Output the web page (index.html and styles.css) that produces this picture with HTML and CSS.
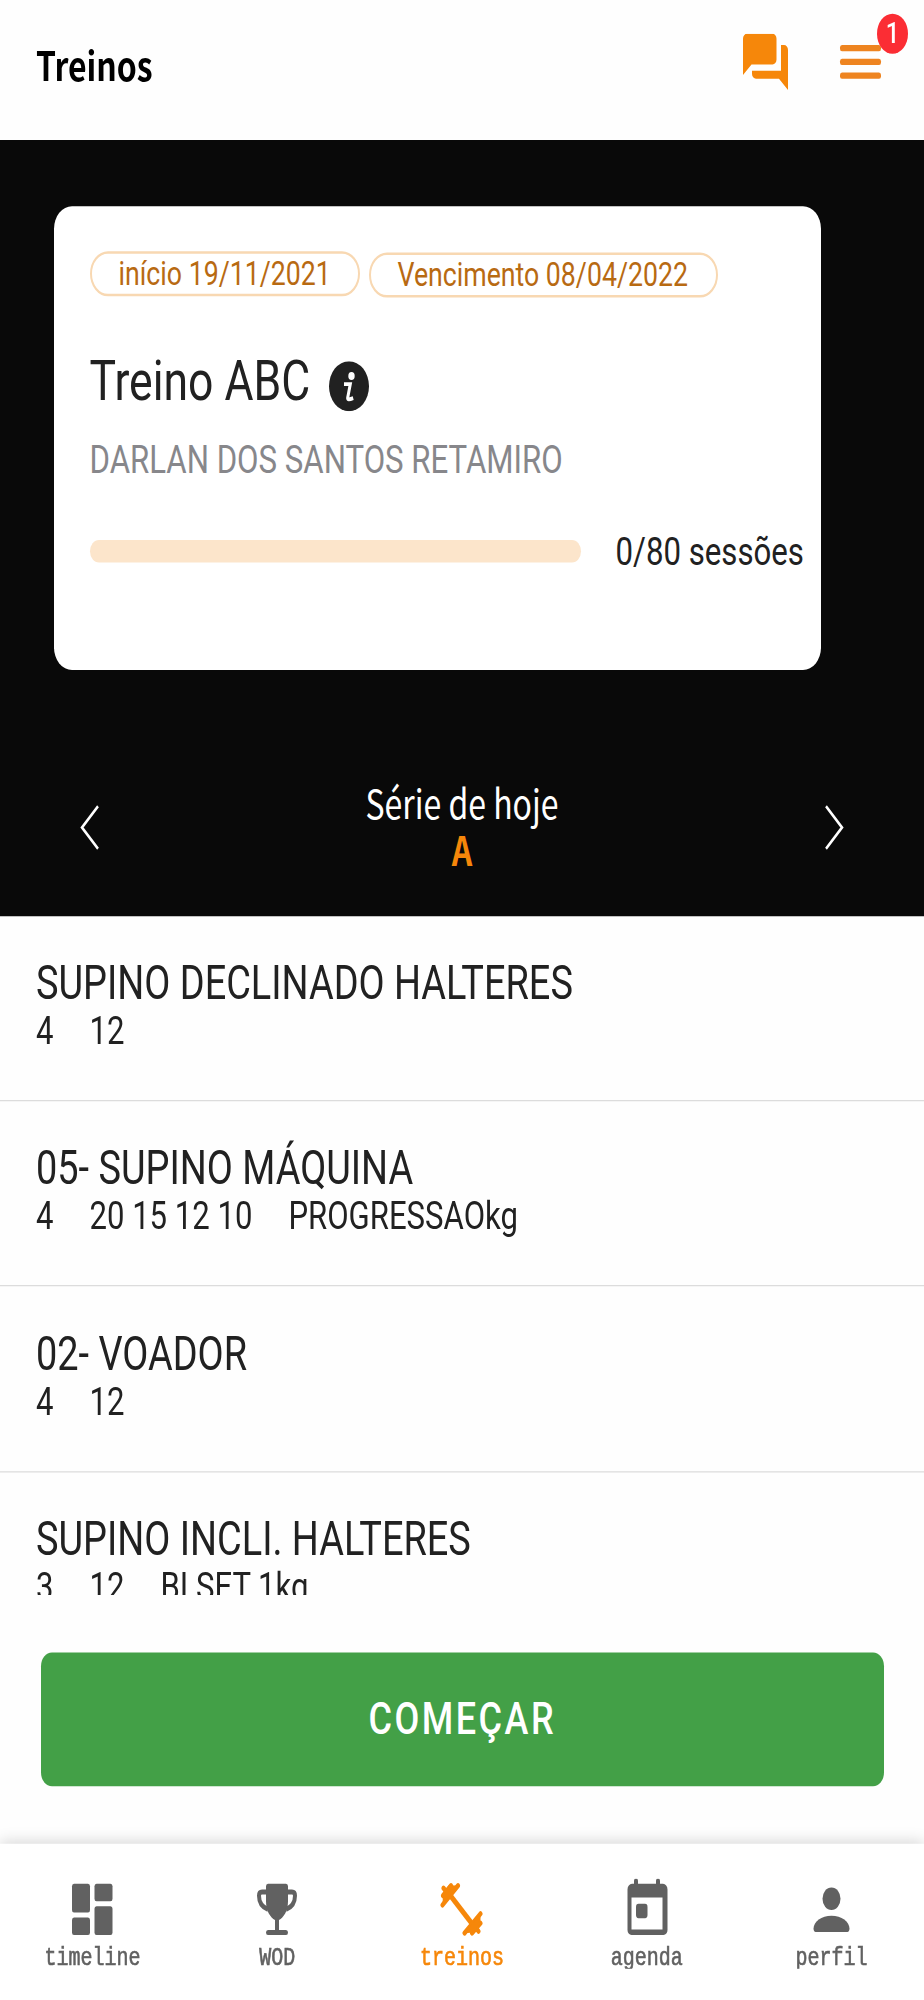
FILE: index.html
```html
<!DOCTYPE html>
<html lang="pt-BR">
<head>
  <meta charset="UTF-8" />
  <meta name="viewport" content="width=device-width, initial-scale=1.0"/>
  <title>Treinos</title>
  <link rel="stylesheet" href="styles.css">
</head>
<body>
  <div class="screen">
    <header class="header">
      <h1>Treinos</h1>
      <div class="header-actions">
        <svg class="chat-icon" viewBox="0 0 45 45">
          <path d="M4 0h25.500a4 4 0 0 1 4 4v16.500a4 4 0 0 1-4 4H8.500L0 33V4a4 4 0 0 1 4-4z"/>
          <path d="M38 9h3a4 4 0 0 1 4 4v32l-9-9H13a4 4 0 0 1-4-4v-2.500h29z"/>
        </svg>
        <div class="menu">
          <span class="menu-line"></span>
          <span class="menu-line"></span>
          <span class="menu-line"></span>
          <span class="badge">1</span>
        </div>
      </div>
    </header>

    <section class="hero">
      <div class="card">
        <div class="chips">
          <span class="chip chip-start">início 19/11/2021</span>
          <span class="chip chip-end">Vencimento 08/04/2022</span>
        </div>
        <div class="card-title">
          <h2>Treino ABC</h2>
          <svg class="info-icon" viewBox="0 0 40 40">
            <circle cx="20" cy="20" r="20"/>
            <circle class="info-mark" cx="22.500" cy="11.800" r="3.200"/>
            <path class="info-stroke" d="M15 18.200h6.300l-2.600 11c-.3 1.600 1.500 1.600 5.500.3"/>
          </svg>
        </div>
        <p class="teacher">DARLAN DOS SANTOS RETAMIRO</p>
        <div class="progress">
          <div class="progress-bar"></div>
          <span class="progress-text">0/80 sessões</span>
        </div>
      </div>

      <div class="series">
        <svg class="arrow" viewBox="0 0 20 36"><path d="M18 1 2 18l16 17"/></svg>
        <div class="series-name">
          <span>Série de hoje</span>
          <strong>A</strong>
        </div>
        <svg class="arrow" viewBox="0 0 20 36"><path d="M2 1l16 17L2 35"/></svg>
      </div>
    </section>

    <ul class="exercises">
      <li>
        <h3>SUPINO DECLINADO HALTERES</h3>
        <p><span>4</span><span>12</span></p>
      </li>
      <li>
        <h3>05- SUPINO MÁQUINA</h3>
        <p><span>4</span><span>20 15 12 10</span><span>PROGRESSAOkg</span></p>
      </li>
      <li>
        <h3>02- VOADOR</h3>
        <p><span>4</span><span>12</span></p>
      </li>
      <li>
        <h3>SUPINO INCLI. HALTERES</h3>
        <p><span>3</span><span>12</span><span>BI SET 1kg</span></p>
      </li>
    </ul>

    <div class="action">
      <button type="button">COMEÇAR</button>
    </div>

    <nav class="tabs">
      <a class="tab">
        <svg viewBox="0 0 44 48">
          <rect x="2" y="4" width="18" height="23" rx="2"/>
          <rect x="24.500" y="4" width="18" height="14" rx="2"/>
          <rect x="2" y="31" width="18" height="14" rx="2"/>
          <rect x="24.500" y="22" width="18" height="23" rx="2"/>
        </svg>
        <span>timeline</span>
      </a>
      <a class="tab">
        <svg viewBox="0 0 44 48">
          <path d="M13 4h18a2 2 0 0 1 2 2v12c0 8-4.500 13-9 15v8h7a2 2 0 0 1 0 4H13a2 2 0 0 1 0-4h7v-8c-4.500-2-9-7-9-15V6a2 2 0 0 1 2-2z"/>
          <path class="handle" d="M11 10.500H7c-2 0-3 1-3 3 0 5 3 9 9 11M33 10.500h4c2 0 3 1 3 3 0 5-3 9-9 11"/>
        </svg>
        <span>WOD</span>
      </a>
      <a class="tab active">
        <svg viewBox="0 0 44 48">
          <path class="bar" d="M9 12 33 37"/>
          <path class="plate" d="M18 5.500 2.500 21M11 5.500 3 13.500M3.500 7.500l4 4M40.500 28 24.500 43.500M40.500 35.500 32 43.500M38.500 42l-4-4"/>
          <path d="M18 5.500 2.500 21 3 11l6-6zM40.500 28 24.500 43.500l9-.5 7-7z"/>
        </svg>
        <span>treinos</span>
      </a>
      <a class="tab">
        <svg viewBox="0 0 44 48">
          <path fill-rule="evenodd" d="M9 1.500a2 2 0 0 1 4 0V4h18V1.500a2 2 0 0 1 4 0V4h3a4.500 4.500 0 0 1 4.500 4.500V41a4 4 0 0 1-4 4h-32a4 4 0 0 1-4-4V8.500A4.500 4.500 0 0 1 7 4h2zM6.500 15v25.500h31V15z"/>
          <rect x="11" y="20" width="11.500" height="11.500" rx="2.500"/>
        </svg>
        <span>agenda</span>
      </a>
      <a class="tab">
        <svg viewBox="0 0 44 48">
          <circle cx="21.500" cy="16" r="9"/>
          <path d="M3.500 40c0-6 8-10.500 18-10.500s18 4.500 18 10.500c0 1.500-1 2.500-2 2.500h-32c-1 0-2-1-2-2.500z"/>
        </svg>
        <span>perfil</span>
      </a>
    </nav>
  </div>
</body>
</html>
```
FILE: styles.css
```css
* {
  box-sizing: border-box;
  margin: 0;
  padding: 0;
}
body {
  height: 2000px;
  overflow: hidden;
  background-color: #fefefe;
  font-family: Roboto, sans-serif;
  color: #212121;
}
h1, h2, h3 {
  font-weight: normal;
}
/* tall display: 924x1600 layout stretched to full height */
.screen {
  display: flex;
  flex-direction: column;
  width: 924px;
  height: 1600px;
  transform: scaleY(1.25);
  transform-origin: 0 0;
}
.header {
  display: flex;
  justify-content: space-between;
  height: 111.600px;
  padding: 0 43.500px 0 36px;
}
.header h1 {
  font-family: "Noto Sans CJK JP", sans-serif;
  font-weight: bold;
  font-size: 32px;
  line-height: 103px;
  color: #000;
}
.header-actions {
  display: flex;
  gap: 52px;
}
.chat-icon {
  width: 45px;
  height: 45px;
  margin-top: 27px;
  fill: #f6870a;
}
.menu {
  position: relative;
  display: flex;
  flex-direction: column;
  gap: 6px;
  width: 40.500px;
  padding-top: 36px;
}
.menu-line {
  height: 5px;
  border-radius: 2px;
  background-color: #ee8420;
}
.badge {
  position: absolute;
  top: 11px;
  left: 37px;
  width: 31px;
  height: 32px;
  border-radius: 50%;
  background-color: #fb2d34;
  color: #fff;
  font-size: 24px;
  font-weight: 500;
  line-height: 31px;
  text-align: center;
}
.hero {
  height: 621px;
  padding-top: 53.500px;
  background-color: #090909;
}
.card {
  width: 767px;
  height: 371px;
  margin-left: 54px;
  padding: 36px 0 0 35.500px;
  border-radius: 18px;
  background-color: #fff;
}
.chips {
  display: flex;
  gap: 9px;
}
.chip {
  height: 36px;
  border: 2px solid #f8d8b2;
  border-radius: 18px;
  font-size: 26.700px;
  line-height: 32px;
  color: #b86a12;
  white-space: nowrap;
}
.chip-start {
  width: 270px;
  padding-left: 27px;
}
.chip-end {
  width: 349px;
  padding-left: 27px;
  margin-top: 1px;
}
.card-title {
  display: flex;
  align-items: flex-start;
  gap: 18.500px;
  height: 64px;
  margin-top: 41px;
}
.card-title h2 {
  font-size: 44.500px;
  line-height: 52px;
}
.info-icon {
  width: 40px;
  height: 40px;
  margin-top: 10px;
  fill: #212121;
}
.info-icon .info-mark {
  fill: #fff;
}
.info-icon .info-stroke {
  fill: none;
  stroke: #fff;
  stroke-width: 3;
}
.teacher {
  font-size: 31.200px;
  line-height: 46px;
  margin-top: 2px;
  color: #87878b;
}
.progress {
  display: flex;
  align-items: center;
  gap: 35px;
  height: 40px;
  margin-top: 30px;
}
.progress-bar {
  width: 491px;
  height: 18px;
  border-radius: 9px;
  background-color: #fce5cb;
}
.progress-text {
  font-size: 31.200px;
  white-space: nowrap;
}
.series {
  display: flex;
  justify-content: space-between;
  height: 90px;
  margin-top: 88.500px;
  padding: 0 80px;
  color: #fff;
}
.arrow {
  width: 20px;
  height: 36px;
  margin-top: 19px;
  fill: none;
  stroke: #fff;
  stroke-width: 2.400;
}
.series-name {
  display: flex;
  flex-direction: column;
  align-items: center;
  margin-top: -2.500px;
  font-family: "Noto Sans CJK JP", sans-serif;
  font-size: 32px;
  line-height: 38px;
}
.series-name strong {
  color: #f6870a;
}
.exercises {
  height: 543px;
  overflow: hidden;
  list-style: none;
}
.exercises li {
  height: 148.600px;
  padding: 30.500px 36px 0;
  border-bottom: 1px solid #dcdcdc;
}
.exercises li:first-child {
  height: 148px;
  padding-top: 30px;
}
.exercises h3 {
  font-size: 37.900px;
  line-height: 46px;
}
.exercises p {
  display: flex;
  gap: 36px;
  margin-top: -3px;
  font-size: 31.100px;
  line-height: 37px;
}
.action {
  height: 199.500px;
  padding: 46px 40px 0 40.500px;
}
.action button {
  display: block;
  width: 100%;
  height: 107.500px;
  border: none;
  border-radius: 11px;
  background-color: #43a047;
  color: #fff;
  font-family: Roboto, sans-serif;
  font-size: 36px;
  font-weight: 500;
  line-height: 106px;
  letter-spacing: 2.500px;
}
.tabs {
  display: flex;
  flex: 1;
  background-color: #fff;
  box-shadow: 0 -2px 12px rgba(0, 0, 0, 0.15);
}
.tab {
  display: flex;
  flex: 1;
  flex-direction: column;
  align-items: center;
  padding-top: 27.500px;
  color: #616161;
}
.tab svg {
  width: 44px;
  height: 48px;
  fill: currentColor;
  stroke: none;
}
.tab .handle {
  fill: none;
  stroke: currentColor;
  stroke-width: 4;
}
.tab .bar {
  stroke: currentColor;
  stroke-width: 4.500;
}
.tab .plate {
  fill: none;
  stroke: currentColor;
  stroke-width: 4;
  stroke-linecap: round;
}
.tab span {
  height: 24px;
  overflow: hidden;
  font-family: "Liberation Mono", monospace;
  font-size: 20px;
  line-height: 31px;
  -webkit-text-stroke: 0.5px currentColor;
}
.tab.active {
  color: #f6870a;
}
```
